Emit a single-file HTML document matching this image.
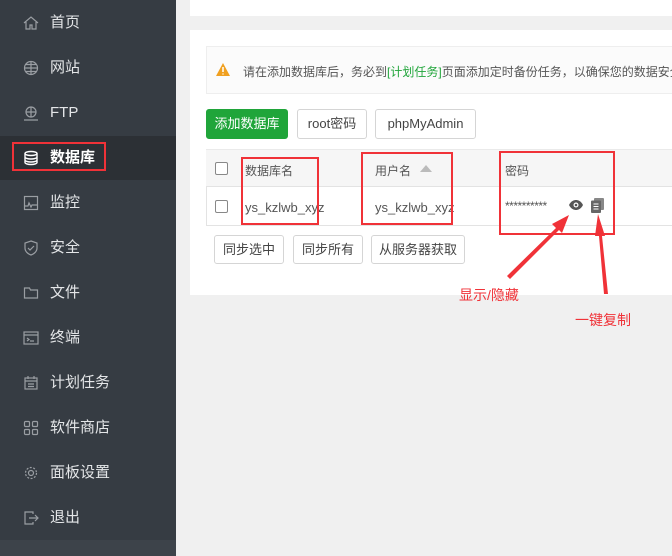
<!DOCTYPE html>
<html><head><meta charset="utf-8"><style>
*{margin:0;padding:0;box-sizing:border-box}
body{width:672px;height:556px;overflow:hidden;background:#f0f0f0;font-family:"Liberation Sans","Noto Sans CJK SC",sans-serif;position:relative}
.side{position:absolute;left:0;top:0;width:176px;height:556px;background:#363c43}
.side .bot{position:absolute;left:0;top:540px;width:176px;height:16px;background:#3d434a}
.item{position:absolute;left:0;width:176px;height:44px;color:#e4e6e8;font-size:15px}
.item span{position:absolute;left:50px;top:0;line-height:44px;height:44px}
.item svg{position:absolute;left:23px;top:14px}
.act{background:#2c3035;color:#fff}
.card{position:absolute;background:#fff}
.btn{position:absolute;height:30px;border:1px solid #d5d5d5;border-radius:3px;background:#fff;font-size:13px;color:#444;text-align:center;line-height:28px}
.red{position:absolute;border:2px solid #f03238}
.t{position:absolute;font-size:12px;color:#555}
.cb{position:absolute;width:13px;height:13px;border:1px solid #888;border-radius:2px;background:#fff}
</style></head><body>
<div class="side">
<div class="item" style="top:1px"><svg width="16" height="16" viewBox="0 0 16 16" fill="none" stroke="#9a9ea3" stroke-width="1.2"><path d="M1 8L8 2l7 6M3 7v7h4v-4h2v4h4V7"/></svg><span>首页</span></div>
<div class="item" style="top:46px"><svg width="16" height="16" viewBox="0 0 16 16" fill="none" stroke="#9a9ea3" stroke-width="1.2"><circle cx="8" cy="8" r="6.5"/><path d="M1.5 8h13M8 1.5v13M3 4.5h10M3 11.5h10"/></svg><span>网站</span></div>
<div class="item" style="top:91px"><svg width="16" height="16" viewBox="0 0 16 16" fill="none" stroke="#9a9ea3" stroke-width="1.2"><circle cx="8" cy="7" r="5"/><path d="M3 7h10M8 2v10M1 15h14"/></svg><span>FTP</span></div>
<div class="item act" style="top:136px"><svg width="16" height="16" viewBox="0 0 16 16" fill="none" stroke="#fff" stroke-width="1.4"><ellipse cx="8" cy="3.5" rx="6" ry="2"/><path d="M2 3.5v9c0 1.1 2.7 2 6 2s6-.9 6-2v-9M2 7c0 1.1 2.7 2 6 2s6-.9 6-2M2 10c0 1.1 2.7 2 6 2s6-.9 6-2"/></svg><span style="font-weight:bold">数据库</span></div>
<div class="red" style="left:12px;top:142px;width:94px;height:29px"></div>
<div class="item" style="top:181px"><svg width="16" height="16" viewBox="0 0 16 16" fill="none" stroke="#9a9ea3" stroke-width="1.2"><rect x="1.5" y="1.5" width="13" height="13"/><path d="M2 11h3l1-3 2 4 1-2h5"/></svg><span>监控</span></div>
<div class="item" style="top:226px"><svg width="16" height="16" viewBox="0 0 16 16" fill="none" stroke="#9a9ea3" stroke-width="1.2"><path d="M8 1l6 2v5c0 3.5-3 6-6 7-3-1-6-3.5-6-7V3z"/><path d="M5 8l2 2 4-4"/></svg><span>安全</span></div>
<div class="item" style="top:271px"><svg width="16" height="16" viewBox="0 0 16 16" fill="none" stroke="#9a9ea3" stroke-width="1.2"><path d="M1.5 3h5l1 2h7v8h-13z"/></svg><span>文件</span></div>
<div class="item" style="top:316px"><svg width="16" height="16" viewBox="0 0 16 16" fill="none" stroke="#9a9ea3" stroke-width="1.2"><rect x="1" y="2" width="14" height="12"/><path d="M1 5h14M4 8l2 1.5L4 11M7 11h4"/></svg><span>终端</span></div>
<div class="item" style="top:361px"><svg width="16" height="16" viewBox="0 0 16 16" fill="none" stroke="#9a9ea3" stroke-width="1.2"><rect x="2" y="3" width="12" height="11"/><path d="M2 6h12M5 1v3M11 1v3M5 9h6M5 11.5h6"/></svg><span>计划任务</span></div>
<div class="item" style="top:406px"><svg width="16" height="16" viewBox="0 0 16 16" fill="none" stroke="#9a9ea3" stroke-width="1.2"><rect x="1.5" y="1.5" width="5" height="5" rx="1"/><rect x="9.5" y="1.5" width="5" height="5" rx="1"/><rect x="1.5" y="9.5" width="5" height="5" rx="1"/><rect x="9.5" y="9.5" width="5" height="5" rx="1"/></svg><span>软件商店</span></div>
<div class="item" style="top:451px"><svg width="16" height="16" viewBox="0 0 16 16" fill="none" stroke="#9a9ea3" stroke-width="1.2"><circle cx="8" cy="8" r="2.5"/><circle cx="8" cy="8" r="5.5" stroke-dasharray="2 1.5"/></svg><span>面板设置</span></div>
<div class="item" style="top:496px"><svg width="16" height="16" viewBox="0 0 16 16" fill="none" stroke="#9a9ea3" stroke-width="1.2"><path d="M10 4V2H2v12h8v-2M6 8h9M12 5l3 3-3 3"/></svg><span>退出</span></div>
<div class="bot"></div>
</div>

<div class="card" style="left:190px;top:0;width:482px;height:16px"></div>
<div class="card" style="left:190px;top:30px;width:482px;height:265px"></div>

<div style="position:absolute;left:206px;top:46px;width:466px;height:48px;background:#fbfbfb;border:1px solid #eee;border-right:none"></div>
<svg style="position:absolute;left:216px;top:63px" width="14" height="13" viewBox="0 0 14 13"><path d="M7 0L14 13H0z" fill="#f0a020"/><path d="M7 4v5M7 10.5v1" stroke="#fff" stroke-width="1.5"/></svg>
<div class="t" style="left:243px;top:63px;color:#555;white-space:nowrap">请在添加数据库后，务必到<span style="color:#20a53a">[计划任务]</span>页面添加定时备份任务，以确保您的数据安全</div>

<div class="btn" style="left:206px;top:109px;width:82px;background:#20a53a;border-color:#20a53a;color:#fff">添加数据库</div>
<div class="btn" style="left:297px;top:109px;width:70px">root密码</div>
<div class="btn" style="left:375px;top:109px;width:101px">phpMyAdmin</div>

<div style="position:absolute;left:206px;top:149px;width:466px;height:38px;background:#f6f6f6;border-top:1px solid #eaeaea;border-bottom:1px solid #e3e3e3"></div>
<div style="position:absolute;left:206px;top:225px;width:466px;height:1px;background:#e3e3e3"></div>
<div style="position:absolute;left:206px;top:187px;width:1px;height:38px;background:#e3e3e3"></div>
<div class="cb" style="left:215px;top:162px"></div>
<div class="cb" style="left:215px;top:200px"></div>
<div class="t" style="left:245px;top:162px">数据库名</div>
<div class="t" style="left:375px;top:162px">用户名</div>
<svg style="position:absolute;left:420px;top:165px" width="12" height="7"><path d="M0 7L6 0l6 7z" fill="#bbb"/></svg>
<div class="t" style="left:505px;top:162px">密码</div>
<div class="t" style="left:245px;top:200px;font-size:13px">ys_kzlwb_xyz</div>
<div class="t" style="left:375px;top:200px;font-size:13px">ys_kzlwb_xyz</div>
<div class="t" style="left:505px;top:199px;font-size:12px;letter-spacing:-0.5px">**********</div>
<svg style="position:absolute;left:569px;top:200px" width="14" height="10" viewBox="0 0 14 10"><path d="M0 5C2 1 5 0 7 0s5 1 7 5c-2 4-5 5-7 5S2 9 0 5z" fill="#555"/><circle cx="7" cy="5" r="2.5" fill="#fff"/><circle cx="7" cy="5" r="1.3" fill="#555"/></svg>
<svg style="position:absolute;left:591px;top:198px" width="13" height="15" viewBox="0 0 13 15"><rect x="3" y="0" width="10" height="12" rx="1" fill="#888"/><rect x="0" y="2.5" width="10" height="12.5" rx="1" fill="#666"/><path d="M2.5 6h5M2.5 8.5h5M2.5 11h5" stroke="#fff" stroke-width="1"/></svg>

<div class="btn" style="left:214px;top:235px;width:70px;height:29px">同步选中</div>
<div class="btn" style="left:293px;top:235px;width:70px;height:29px">同步所有</div>
<div class="btn" style="left:371px;top:235px;width:94px;height:29px">从服务器获取</div>

<div class="red" style="left:241px;top:157px;width:78px;height:68px"></div>
<div class="red" style="left:361px;top:152px;width:92px;height:73px"></div>
<div class="red" style="left:499px;top:151px;width:116px;height:84px"></div>

<svg style="position:absolute;left:0;top:0" width="672" height="556">
<path d="M507 276L556 228 552 224 569 215 562 233 559 230 510 279z" fill="#f03238"/>
<path d="M604 294L599 236 595 236 598 214 605 236 602 236 608 294z" fill="#f03238"/>
</svg>
<div style="position:absolute;left:459px;top:285px;color:#f03238;font-size:14px">显示/隐藏</div>
<div style="position:absolute;left:575px;top:310px;color:#f03238;font-size:14px">一键复制</div>
</body></html>
